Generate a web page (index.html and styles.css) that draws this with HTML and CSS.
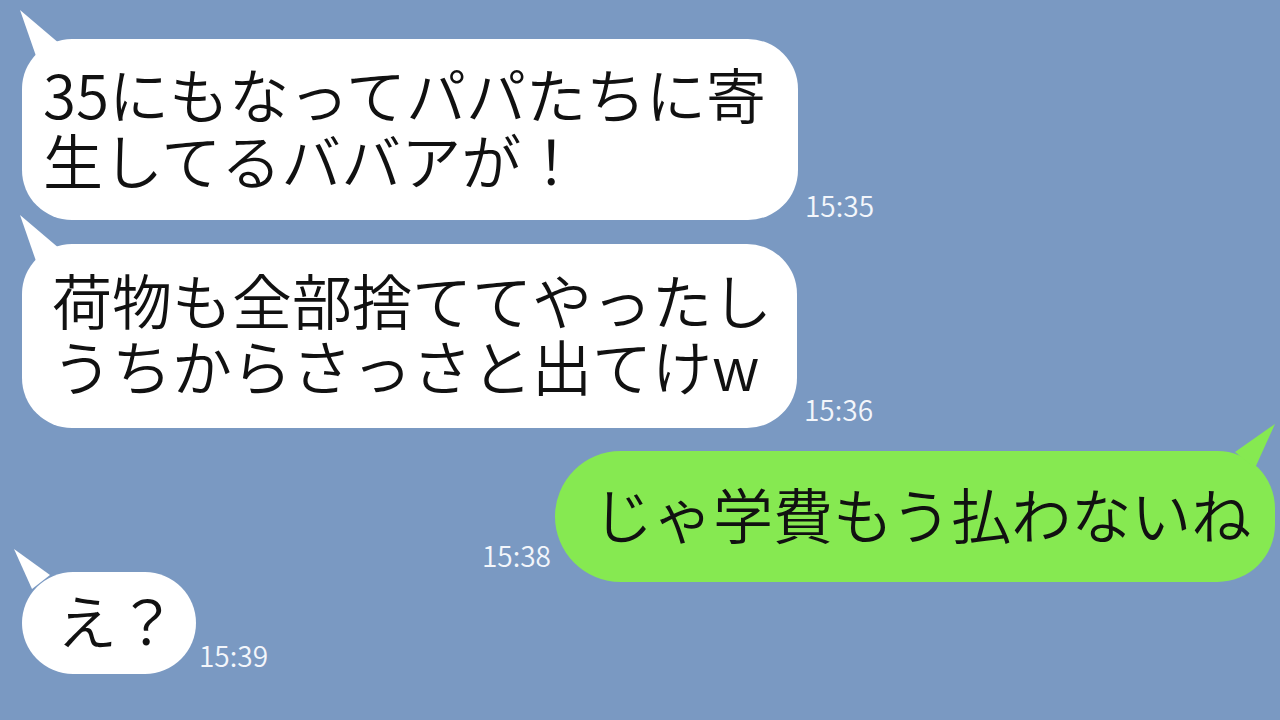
FILE: index.html
```html
<!DOCTYPE html>
<html lang="ja">
<head>
    <meta charset="UTF-8">
    <meta name="viewport" content="width=device-width, initial-scale=1.0">
    <title>トーク</title>
    <link rel="stylesheet" href="styles.css">
</head>
<body>
    <div class="chat">
        <!-- received -->
        <div class="row">
            <div class="bubble bubble-one">
                <svg class="tail" width="50" height="50" viewBox="0 0 50 50"><polygon points="0,0 16,46 40,34"/></svg>
                <p>35にもなってパパたちに寄<br>生してるババアが！</p>
            </div>
            <span class="time time-first">15:35</span>
        </div>

        <div class="row row-second">
            <div class="bubble bubble-two">
                <svg class="tail" width="50" height="50" viewBox="0 0 50 50"><polygon points="0,0 16,46 40,34"/></svg>
                <p>荷物も全部捨ててやったし<br>うちからさっさと出てけw</p>
            </div>
            <span class="time">15:36</span>
        </div>

        <!-- sent -->
        <div class="row row-sent">
            <span class="time time-sent">15:38</span>
            <div class="bubble bubble-sent">
                <svg class="tail tail-sent" width="50" height="50" viewBox="0 0 50 50"><polygon points="50,0 10,28 30,44"/></svg>
                <p>じゃ学費もう払わないね</p>
            </div>
        </div>

        <div class="row row-last">
            <div class="bubble bubble-short">
                <svg class="tail tail-short" width="40" height="40" viewBox="0 0 40 40"><polygon points="0,0 18,40 36,26"/></svg>
                <p>え？</p>
            </div>
            <span class="time">15:39</span>
        </div>
    </div>
</body>
</html>
```

FILE: styles.css
```css
body {
    margin: 0;
    width: 1280px;
    height: 720px;
    overflow: hidden;
    background-color: #7a99c2;
    font-family: "Noto Sans CJK JP", "Noto Sans", sans-serif;
}

.chat {
    display: flex;
    flex-direction: column;
    padding: 39px 5px 0 22px;
}

.row {
    display: flex;
    align-items: flex-end;
    gap: 7px;
}

.row-second {
    margin-top: 24px;
}

.row-sent {
    justify-content: flex-end;
    gap: 4px;
    margin-top: 23px;
}

.row-last {
    margin-top: -10px;
    gap: 3px;
}

.bubble {
    position: relative;
    display: flex;
    align-items: center;
    box-sizing: border-box;
    background-color: #fff;
    border-radius: 50px;
}

.bubble p {
    margin: 0 0 8px;
    font-size: 60px;
    font-weight: 350;
    line-height: 66px;
    color: #111;
    white-space: nowrap;
}

.bubble-one {
    width: 776px;
    height: 181px;
    padding-left: 21px;
}

.bubble-two {
    width: 775px;
    height: 184px;
    padding-left: 30px;
}

.bubble-sent {
    width: 720px;
    height: 131px;
    padding-left: 38px;
    background-color: #86e951;
    border-radius: 66px 58px 58px 66px;
}

.bubble-short {
    width: 174px;
    height: 102px;
    padding-left: 35px;
    border-radius: 51px;
}

/* little speech tails */
.tail {
    position: absolute;
    left: -2px;
    top: -29px;
    fill: #fff;
}

.tail-sent {
    left: auto;
    right: 0;
    top: -27px;
    fill: #86e951;
}

.tail-short {
    left: -8px;
    top: -23px;
}

.time {
    font-size: 28px;
    font-weight: 350;
    line-height: 1;
    color: #f3f6fb;
    margin-bottom: 5px;
}

.time-first {
    margin-bottom: 1px;
}

.time-sent {
    margin-bottom: 13px;
}
```
